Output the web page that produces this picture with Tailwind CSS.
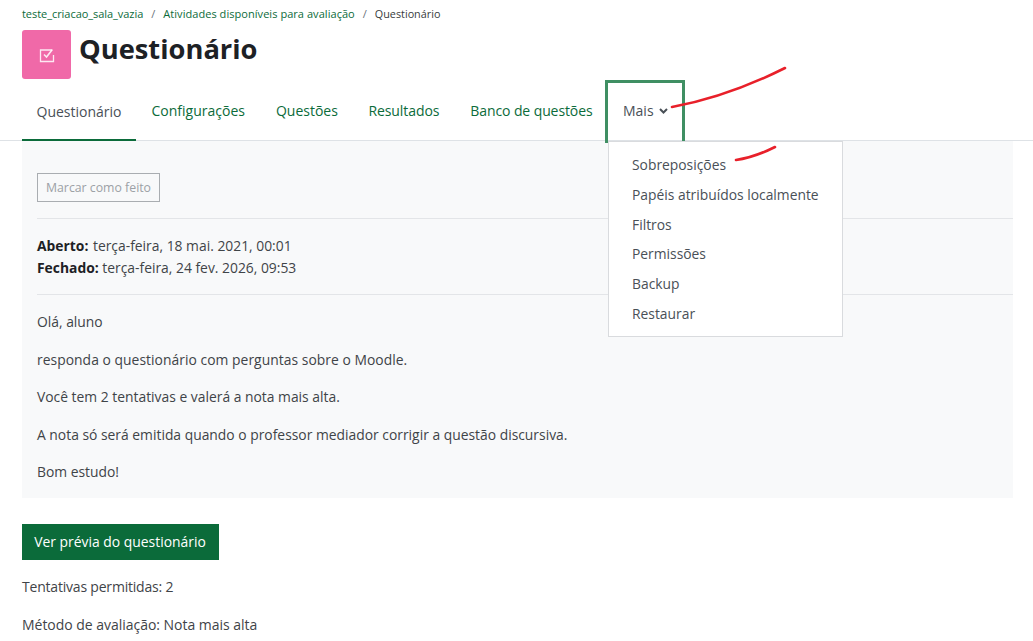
<!DOCTYPE html>
<html lang="en">

<head>
  <meta charset="UTF-8">
  <title>Questionário</title>
  <script src="https://cdn.jsdelivr.net/npm/@tailwindcss/browser@4"></script>
</head>

<body class="bg-white text-[#3f4448] font-['Open_Sans',sans-serif] text-[14px] overflow-hidden">
  <div class="relative h-[641px] w-[1033px] overflow-hidden">
    <!-- breadcrumb -->
    <nav class="mb-[1px] flex h-[29px] items-center gap-[8px] pl-[22px] text-[11px]">
      <a class="text-[#0b6b3a] tracking-[-0.05px]">teste_criacao_sala_vazia</a>
      <span class="text-[#6a737b]">/</span>
      <a class="text-[#0b6b3a] tracking-[0.05px]">Atividades disponíveis para avaliação</a>
      <span class="text-[#6a737b]">/</span>
      <span class="text-[#373a3c] text-[10.8px]">Questionário</span>
    </nav>

    <!-- header -->
    <div class="flex items-start gap-[8px] pl-[22px]">
      <div class="flex h-[49px] w-[49px] items-center justify-center rounded-[3px] bg-[#f069a8]">
        <svg width="16" height="16" viewBox="0 0 16 16" fill="none" stroke="#fff" stroke-opacity="0.85" stroke-width="1.3">
          <path d="M13.5 3H1.5V14.5H14.5V8" />
          <path d="M5 7.5L7.5 10L13 3" stroke-width="1.6" />
        </svg>
      </div>
      <h1 class="text-[27.3px] leading-[38px] font-bold text-[#1d2125]">Questionário</h1>
    </div>

    <!-- tabs -->
    <div class="mt-[9px] flex h-[53px] items-stretch border-b border-[#dee2e6] pl-[22px]">
      <a class="flex h-[53px] w-[114px] items-center justify-center border-b-[2px] border-[#0b6b3a] pb-[5px] text-[#495057]">Questionário</a>
      <a class="flex items-center px-[15.5px] pb-[7px] text-[#0b6b3a]">Configurações</a>
      <a class="flex items-center px-[15.5px] pb-[7px] text-[#0b6b3a]">Questões</a>
      <a class="flex items-center pl-[15px] pr-[15.5px] pb-[7px] text-[#0b6b3a] tracking-[-0.08px]">Resultados</a>
      <a class="flex items-center px-[15.5px] pb-[7px] text-[#0b6b3a] tracking-[-0.1px]">Banco de questões</a>
      <a class="flex items-center gap-[5px] pl-[15px] pb-[7px] text-[#495057]">Mais
        <svg width="9" height="6" viewBox="0 0 9 6" fill="none" stroke="#495057" stroke-width="2"><path d="M1 1L4.5 4.5L8 1" /></svg>
      </a>
    </div>

    <!-- main panel -->
    <main class="ml-[22px] h-[357px] w-[991px] bg-[#f8f9fa] pl-[15px] pt-[32px] text-[13.87px]">
      <button class="h-[29px] w-[123px] border border-[#a9adb1] pt-[1px] text-[12.3px] text-[#9ca1a6]">Marcar como feito</button>
      <div class="mt-[16px] border-t border-[#e3e5e8] pt-[16px] leading-[21.5px]">
        <p><b class="pr-[1px] font-bold text-[#1d2125]">Aberto:</b> terça-feira, 18 mai. 2021, 00:01</p>
        <p><b class="font-bold text-[#1d2125]">Fechado:</b> terça-feira, 24 fev. 2026, 09:53</p>
      </div>
      <div class="mt-[16px] flex flex-col gap-[17.5px] border-t border-[#e3e5e8] pt-[17px] leading-[20px]">
        <p>Olá, aluno</p>
        <p class="tracking-[0.04px]">responda o questionário com perguntas sobre o Moodle.</p>
        <p>Você tem 2 tentativas e valerá a nota mais alta.</p>
        <p>A nota só será emitida quando o professor mediador corrigir a questão discursiva.</p>
        <p>Bom estudo!</p>
      </div>
    </main>

    <!-- below panel -->
    <div class="pl-[22px] pt-[26px]">
      <button class="h-[36px] w-[197px] bg-[#0b6b3a] pr-[1px] text-[13.9px] font-medium text-white">Ver prévia do questionário</button>
      <p class="mt-[17px] leading-[20px] tracking-[-0.2px]">Tentativas permitidas: 2</p>
      <p class="mt-[17.5px] leading-[20px] tracking-[-0.03px]">Método de avaliação: Nota mais alta</p>
    </div>

    <!-- annotation box, the menu sits on top of its right edge -->
    <div class="absolute left-[605px] top-[80px] h-[63px] w-[80px] border-[3px] border-b-0 border-[#3f8f63]"></div>

    <!-- dropdown -->
    <ul class="absolute left-[608px] top-[141px] flex h-[196px] w-[235px] flex-col gap-[9.8px] border border-[#d9dbde] bg-white pl-[23px] pt-[13px] text-[13.85px] leading-[20px] text-[#495057]">
      <li>Sobreposições</li>
      <li>Papéis atribuídos localmente</li>
      <li>Filtros</li>
      <li>Permissões</li>
      <li>Backup</li>
      <li>Restaurar</li>
    </ul>

    <!-- red marks drawn over the screenshot -->
    <svg class="absolute left-0 top-0" width="1033" height="641" fill="none" stroke="#e8202a" stroke-width="2.6" stroke-linecap="round">
      <path d="M672 107C705 101 745 88 785 68" />
      <path d="M736 160C750 158 763 153 775 147" />
    </svg>
  </div>
</body>

</html>
